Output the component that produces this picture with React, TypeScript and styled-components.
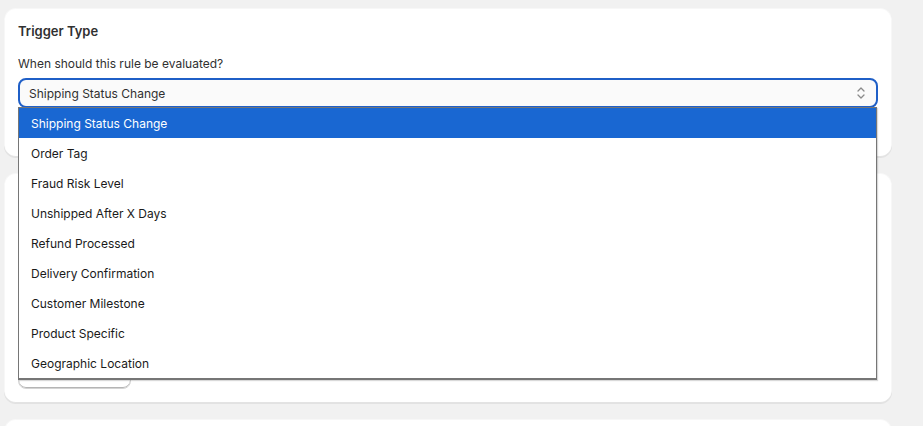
import styled, { createGlobalStyle } from "styled-components";

const GlobalStyle = createGlobalStyle`
  html, body {
    margin: 0;
    padding: 0;
    background: #f1f1f1;
    font-family: Inter, "Noto Sans", Arial, sans-serif;
    color: #303030;
    overflow: hidden;
  }
`;

const Page = styled.div`
  width: 888px;
  padding: 8px 0 0 4px;
  display: flex;
  flex-direction: column;
  gap: 16px;
`;

const Card = styled.section<{ $minH?: number }>`
  background: #ffffff;
  border-radius: 12px;
  padding: 13px 14px 14px;
  min-height: ${(p) => p.$minH ?? 0}px;
  box-shadow: 0 1px 0 0 rgba(26, 26, 26, 0.07),
    inset 0 -1px 0 0 rgba(0, 0, 0, 0.08),
    inset 0 0 0 1px rgba(0, 0, 0, 0.03);
  display: flex;
  flex-direction: column;
`;

const Title = styled.h2`
  margin: 0 0 13px;
  font-size: 13px;
  line-height: 20px;
  font-weight: 600;
  color: #303030;
`;

const Label = styled.label`
  display: block;
  font-size: 12px;
  line-height: 20px;
  color: #303030;
  margin-bottom: 4px;
`;

const SelectWrap = styled.div`
  position: relative;
`;

const SelectBox = styled.div`
  height: 30px;
  box-sizing: border-box;
  border: 2px solid #1f5fc7;
  border-radius: 8px;
  background: #fafafa;
  display: flex;
  align-items: center;
  justify-content: space-between;
  padding: 0 10px 0 9px;
  font-size: 12px;
  color: #303030;
`;

const Chevrons = styled.svg`
  width: 10px;
  height: 14px;
  flex: none;
`;

const OptionList = styled.ul`
  position: absolute;
  top: 29px;
  left: 0;
  width: 857px;
  margin: 0;
  padding: 0;
  list-style: none;
  background: #ffffff;
  border: 1px solid #767676;
  border-bottom-width: 2px;
  box-shadow: 1px 1px 1px rgba(0, 0, 0, 0.15);
  z-index: 10;
`;

const OptionItem = styled.li<{ $active?: boolean }>`
  height: 30px;
  display: flex;
  align-items: center;
  padding: 0 12px;
  font-size: 12px;
  color: ${(p) => (p.$active ? "#ffffff" : "#1a1a1a")};
  background: ${(p) => (p.$active ? "#1967d2" : "transparent")};
`;

const Spacer = styled.div<{ $h: number }>`
  height: ${(p) => p.$h}px;
  flex: none;
`;

const Button = styled.button`
  width: 113px;
  height: 30px;
  border: 1px solid #d4d4d4;
  border-radius: 8px;
  background: #ffffff;
  box-shadow: inset 0 -1px 0 #b5b5b5;
`;

const options = [
  "Shipping Status Change",
  "Order Tag",
  "Fraud Risk Level",
  "Unshipped After X Days",
  "Refund Processed",
  "Delivery Confirmation",
  "Customer Milestone",
  "Product Specific",
  "Geographic Location",
];

export default function App() {
  return (
    <>
      <GlobalStyle />
      <Page>
        <Card>
          <Title>Trigger Type</Title>
          <Label>When should this rule be evaluated?</Label>
          <SelectWrap>
            <SelectBox>
              <span>Shipping Status Change</span>
              <Chevrons
                viewBox="0 0 10 14"
                fill="none"
                stroke="#8a8a8a"
                strokeWidth="1.3"
                strokeLinecap="round"
                strokeLinejoin="round"
              >
                <path d="M2 5l3-3 3 3" />
                <path d="M2 9l3 3 3-3" />
              </Chevrons>
            </SelectBox>
            <OptionList>
              {options.map((o, i) => (
                <OptionItem key={o} $active={i === 0}>
                  {o}
                </OptionItem>
              ))}
            </OptionList>
          </SelectWrap>
          <Spacer $h={35} />
        </Card>

        {/* covered by the open list, only its button edge shows */}
        <Card>
          <Spacer $h={173} />
          <Button aria-label="Add condition" />
        </Card>

        <Card $minH={60} />
      </Page>
    </>
  );
}
